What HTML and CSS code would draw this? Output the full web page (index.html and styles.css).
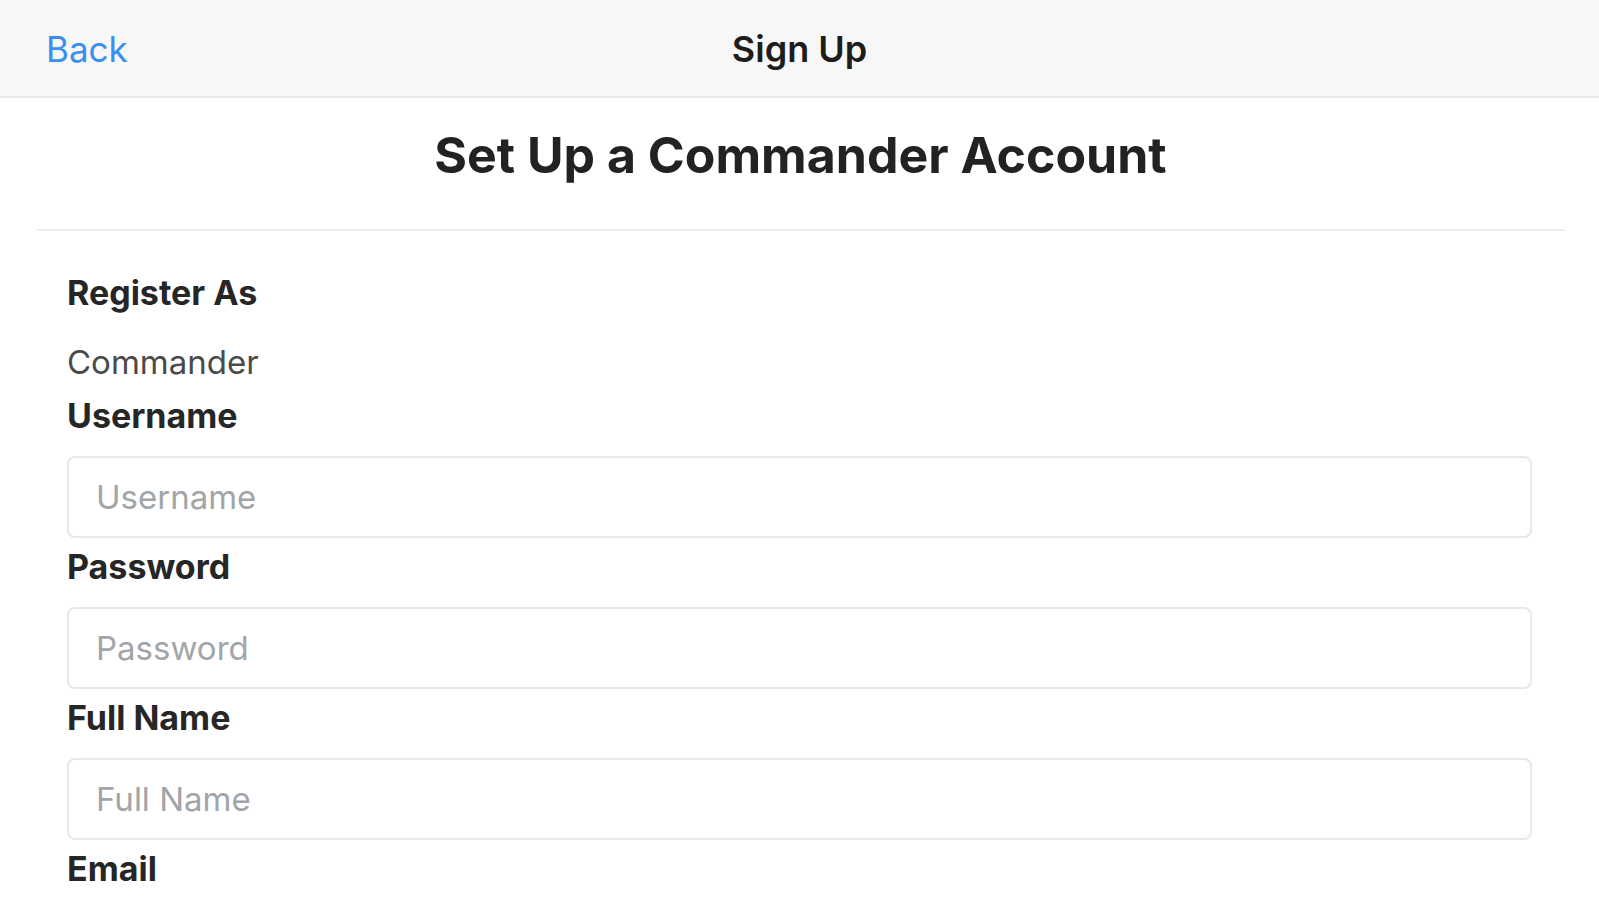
FILE: index.html
```html
<!DOCTYPE html>
<html lang="en">
<head>
<meta charset="utf-8">
<title>Sign Up</title>
<link rel="stylesheet" href="styles.css">
</head>
<body>
<header class="navbar">
  <a class="nav-back" href="#">Back</a>
  <div class="nav-title">Sign Up</div>
  <div class="nav-spacer"></div>
</header>
<main class="page">
  <h1 class="page-title">Set Up a Commander Account</h1>
  <form class="form">
    <div class="field-static">
      <div class="label">Register As</div>
      <div class="static-value">Commander</div>
    </div>
    <div class="field">
      <label class="label" for="username">Username</label>
      <input class="input" id="username" type="text" placeholder="Username">
    </div>
    <div class="field">
      <label class="label" for="password">Password</label>
      <input class="input" id="password" type="password" placeholder="Password">
    </div>
    <div class="field">
      <label class="label" for="fullname">Full Name</label>
      <input class="input" id="fullname" type="text" placeholder="Full Name">
    </div>
    <div class="field">
      <label class="label" for="email">Email</label>
      <input class="input" id="email" type="email" placeholder="Email">
    </div>
  </form>
</main>
</body>
</html>
```

FILE: styles.css
```css
* { box-sizing: border-box; }
html, body { margin: 0; padding: 0; background: #ffffff; }
body {
  font-family: Inter, "Noto Sans", "Liberation Sans", sans-serif;
  color: #222222;
  overflow: hidden;
}
.navbar {
  display: grid;
  grid-template-columns: 1fr auto 1fr;
  align-items: center;
  height: 98px;
  background: #f7f7f7;
  border-bottom: 2px solid #e7e7e7;
  padding: 2px 46px 0 46px;
}
.nav-back {
  justify-self: start;
  font-size: 35px;
  color: #3a8ef2;
  text-decoration: none;
  line-height: 40px;
}
.nav-title {
  font-size: 36px;
  font-weight: 600;
  color: #1d1d1d;
  line-height: 40px;
}
.page {
  padding: 0 34px 0 36px;
}
.page-title {
  margin: 0;
  padding: 27px 0 44px;
  font-size: 50px;
  line-height: 60px;
  font-weight: 700;
  color: #222222;
  text-align: center;
  border-bottom: 2px solid #ededed;
}
.form {
  padding: 42px 33px 0 31px;
  display: flex;
  flex-direction: column;
}
.label {
  display: block;
  font-size: 34px;
  line-height: 40px;
  font-weight: 700;
  color: #262626;
}
.field-static {
  display: flex;
  flex-direction: column;
  gap: 29px;
  margin-bottom: 14px;
}
.static-value {
  font-size: 33px;
  line-height: 40px;
  color: #4a4a4a;
}
.field {
  display: flex;
  flex-direction: column;
  gap: 20px;
  margin-bottom: 9px;
}
.input {
  width: 100%;
  height: 82px;
  border: 2px solid #e8e8e8;
  border-radius: 8px;
  padding: 0 27px;
  font-family: inherit;
  font-size: 33px;
  color: #333333;
  background: #ffffff;
  outline: none;
}
.input::placeholder {
  color: #a2a5a8;
}
```
